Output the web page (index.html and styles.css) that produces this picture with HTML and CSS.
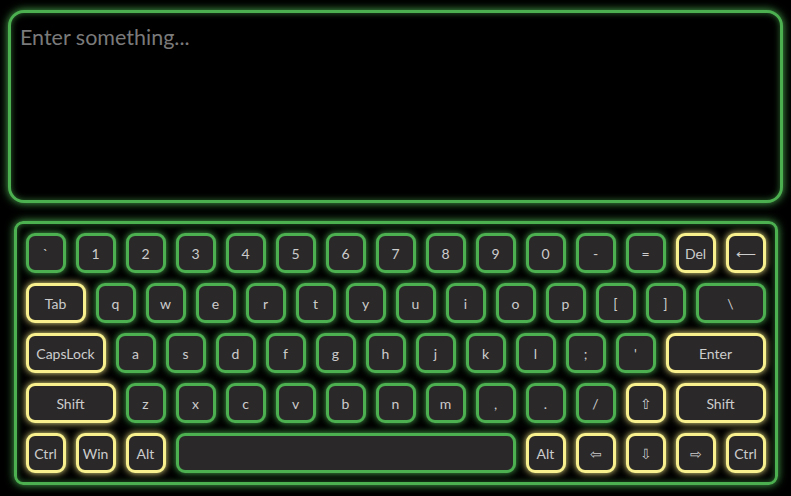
FILE: index.html
```html
<!DOCTYPE html>
<html>
<head>
<meta charset="utf-8">
<link rel="stylesheet" href="styles.css">
</head>
<body>
<div class="page">
  <textarea class="input" placeholder="Enter something..." autofocus></textarea>
  <div class="keyboard">
    <div class="row">
      <div class="key">`</div><div class="key">1</div><div class="key">2</div><div class="key">3</div><div class="key">4</div><div class="key">5</div><div class="key">6</div><div class="key">7</div><div class="key">8</div><div class="key">9</div><div class="key">0</div><div class="key">-</div><div class="key">=</div><div class="key mod">Del</div><div class="key mod">&#x27F5;</div>
    </div>
    <div class="row">
      <div class="key mod w60">Tab</div><div class="key">q</div><div class="key">w</div><div class="key">e</div><div class="key">r</div><div class="key">t</div><div class="key">y</div><div class="key">u</div><div class="key">i</div><div class="key">o</div><div class="key">p</div><div class="key">[</div><div class="key">]</div><div class="key w70">\</div>
    </div>
    <div class="row">
      <div class="key mod w80">CapsLock</div><div class="key">a</div><div class="key">s</div><div class="key">d</div><div class="key">f</div><div class="key">g</div><div class="key">h</div><div class="key">j</div><div class="key">k</div><div class="key">l</div><div class="key">;</div><div class="key">'</div><div class="key mod w100">Enter</div>
    </div>
    <div class="row">
      <div class="key mod w90">Shift</div><div class="key">z</div><div class="key">x</div><div class="key">c</div><div class="key">v</div><div class="key">b</div><div class="key">n</div><div class="key">m</div><div class="key">,</div><div class="key">.</div><div class="key">/</div><div class="key mod">&#x21E7;</div><div class="key mod w90">Shift</div>
    </div>
    <div class="row">
      <div class="key mod">Ctrl</div><div class="key mod">Win</div><div class="key mod">Alt</div><div class="key w340"></div><div class="key mod">Alt</div><div class="key mod">&#x21E6;</div><div class="key mod">&#x21E9;</div><div class="key mod">&#x21E8;</div><div class="key mod">Ctrl</div>
    </div>
  </div>
</div>
</body>
</html>
```

FILE: styles.css
```css
html, body {
  margin: 0;
  padding: 0;
  background: #000;
}
body {
  padding: 10px 8px 8px 8px;
  font-family: Lato, "Noto Sans", sans-serif;
}
.page {
  display: flex;
  flex-direction: column;
  align-items: center;
  gap: 18px;
}
.input {
  display: block;
  box-sizing: border-box;
  width: 775px;
  height: 193px;
  margin: 0;
  padding: 11px 9px;
  background: #000;
  color: #ddd;
  border: 3px solid #4caf50;
  border-radius: 16px;
  box-shadow: 0 0 8px #4caf50, inset 0 0 6px rgba(76,175,80,0.6);
  font-family: Lato, "Noto Sans", sans-serif;
  font-size: 21.5px;
  resize: none;
  outline: none;
  caret-color: #ccc;
}
.input::placeholder {
  color: #7a7a7a;
}
.keyboard {
  box-sizing: border-box;
  width: 764px;
  padding: 4px;
  border: 3px solid #4caf50;
  border-radius: 9px;
  box-shadow: 0 0 8px #4caf50, inset 0 0 6px rgba(76,175,80,0.6);
  display: flex;
  flex-direction: column;
}
.row {
  display: flex;
}
.key {
  box-sizing: border-box;
  width: 40px;
  height: 40px;
  margin: 5px;
  flex: none;
  display: flex;
  align-items: center;
  justify-content: center;
  background: #2a2829;
  border: 3px solid #4caf50;
  border-radius: 9px;
  box-shadow: 0 0 7px #4caf50;
  color: #cccccc;
  font-size: 14px;
}
.key.mod {
  border-color: #f7f08c;
  box-shadow: 0 0 7px #f7f08c;
}
.w60 { width: 60px; }
.w70 { width: 70px; }
.w80 { width: 80px; }
.w90 { width: 90px; }
.w100 { width: 100px; }
.w340 { width: 340px; }
```
